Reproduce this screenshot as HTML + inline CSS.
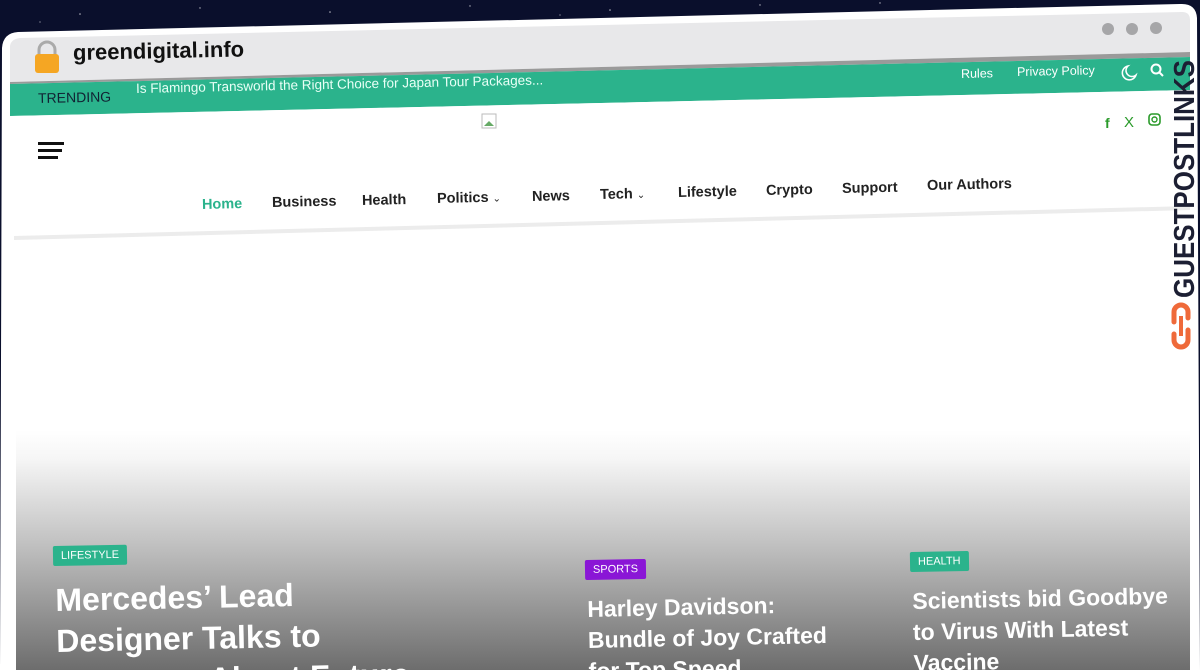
<!DOCTYPE html>
<html><head><meta charset="utf-8"><style>
html,body{margin:0;padding:0;width:1200px;height:670px;overflow:hidden;background:#0a0f2c;font-family:"Liberation Sans",sans-serif}
#w{position:relative;width:1200px;height:670px;overflow:hidden}
.a{position:absolute;white-space:nowrap;transform-origin:0 50%}
.nav{font-size:14.5px;font-weight:bold;color:#222}
.tag{position:absolute;color:#fff;font-size:11px;padding:4px 8px;border-radius:2px;transform-origin:0 50%}
.h{position:absolute;color:#fff;font-weight:bold;transform-origin:0 0;white-space:nowrap}
</style></head><body><div id="w">
<svg width="1200" height="670" style="position:absolute;left:0;top:0">
<defs>
<linearGradient id="g" x1="0" y1="0" x2="0" y2="1">
<stop offset="0" stop-color="#fff"/><stop offset="0.12" stop-color="#f6f6f6"/><stop offset="0.5" stop-color="#bdbdbd"/><stop offset="1" stop-color="#6d6d6d"/></linearGradient>
</defs>
<g fill="#fff" opacity="0.7"><circle cx="80" cy="14" r="0.8"/><circle cx="200" cy="8" r="0.7"/><circle cx="330" cy="12" r="0.8"/><circle cx="470" cy="6" r="0.7"/><circle cx="610" cy="10" r="0.8"/><circle cx="760" cy="5" r="0.7"/><circle cx="880" cy="3" r="0.7"/><circle cx="40" cy="22" r="0.6"/><circle cx="560" cy="15" r="0.6"/><circle cx="10" cy="300" r="0.6"/><circle cx="5" cy="480" r="0.6"/></g>
<path d="M18 32 L1180 4 Q1196 3 1197 18 L1200 670 L0 670 L2 48 Q3 33 18 32Z" fill="#fff"/>
<path d="M10 46 Q11 39 20 38 L1182 12 Q1190 12 1190 20 L1190 52 L10 82Z" fill="#e8e8ea"/>
<path d="M10 82 L1190 52 L1190 57 L10 84Z" fill="#9a9a9a"/>
<path d="M10 84 L1190 57 L1190 90 L10 116Z" fill="#2bb38c"/>
<path d="M12 116 L1190 90 L1190 670 L14 670Z" fill="#fff"/>
<path d="M14 236 L1190 206 L1190 210 L14 240Z" fill="#ececec"/>
<rect x="16" y="430" width="1174" height="240" fill="url(#g)"/>
<circle cx="1108" cy="29" r="6" fill="#a6a6a8"/><circle cx="1132" cy="29" r="6" fill="#a6a6a8"/><circle cx="1156" cy="28" r="6" fill="#a6a6a8"/>
<path d="M39 55 V50 a8 8 0 0 1 16 0 V55" fill="none" stroke="#aaa" stroke-width="3"/>
<rect x="35" y="54" width="24" height="19" rx="3" fill="#f5a623"/>
<path d="M1128 66 a7 7 0 1 0 8 9 a5.5 5.5 0 0 1 -8 -9z" fill="none" stroke="#fff" stroke-width="1.5"/>
<circle cx="1156" cy="69" r="4.5" fill="none" stroke="#fff" stroke-width="2"/><path d="M1159 72 L1163 76" stroke="#fff" stroke-width="2"/>
<rect x="38" y="142" width="26" height="3" fill="#111"/><rect x="38" y="149" width="24" height="3" fill="#111"/><rect x="38" y="156" width="20" height="3" fill="#111"/>
<rect x="482" y="114" width="14" height="14" fill="none" stroke="#bbb" stroke-width="1"/><path d="M484 126 L489 121 L494 126Z" fill="#6a6"/>
<text x="1105" y="128" font-family="Liberation Sans" font-weight="bold" font-size="14" fill="#2a9a2a">f</text>
<text x="1124" y="127" font-family="Liberation Sans" font-size="15" fill="#2a9a2a">X</text>
<rect x="1149" y="114" width="11" height="11" rx="3" fill="none" stroke="#2a9a2a" stroke-width="1.6"/><circle cx="1154.5" cy="119.5" r="2.5" fill="none" stroke="#2a9a2a" stroke-width="1.4"/>
<text transform="translate(1194,298) rotate(-90)" font-family="Liberation Sans" font-weight="bold" font-size="29" fill="#1c1f33" textLength="238" lengthAdjust="spacingAndGlyphs">GUESTPOSTLINKS</text>
<path d="M1188 318 v-6 a7 7 0 0 0 -14 0 v10 M1174 334 v6 a7 7 0 0 0 14 0 v-10" fill="none" stroke="#ef6a3a" stroke-width="5" stroke-linecap="round"/>
<path d="M1181 316 L1181 336" stroke="#ef6a3a" stroke-width="4"/>
</svg>
<div class="a" style="left:73px;top:40px;font-size:22px;font-weight:bold;color:#111;transform:rotate(-1.2deg)">greendigital.info</div>
<div class="a" style="left:38px;top:90px;font-size:14px;color:#123;transform:rotate(-1.2deg)">TRENDING</div>
<div class="a" style="left:136px;top:81px;font-size:13.5px;color:#e8fff6;transform:rotate(-1.2deg)">Is Flamingo Transworld the Right Choice for Japan Tour Packages...</div>
<div class="a" style="left:961px;top:67px;font-size:12.5px;color:#fff;transform:rotate(-1.2deg)">Rules</div>
<div class="a" style="left:1017px;top:65px;font-size:12.5px;color:#fff;transform:rotate(-1.2deg)">Privacy Policy</div>
<div class="a nav" style="left:202px;top:197px;color:#2bb38c;transform:rotate(-1.3deg)">Home</div>
<div class="a nav" style="left:272px;top:195px;transform:rotate(-1.3deg)">Business</div>
<div class="a nav" style="left:362px;top:193px;transform:rotate(-1.3deg)">Health</div>
<div class="a nav" style="left:437px;top:191px;transform:rotate(-1.3deg)">Politics <span style="font-weight:normal;font-size:10px">&#8964;</span></div>
<div class="a nav" style="left:532px;top:189px;transform:rotate(-1.3deg)">News</div>
<div class="a nav" style="left:600px;top:187px;transform:rotate(-1.3deg)">Tech <span style="font-weight:normal;font-size:10px">&#8964;</span></div>
<div class="a nav" style="left:678px;top:185px;transform:rotate(-1.3deg)">Lifestyle</div>
<div class="a nav" style="left:766px;top:183px;transform:rotate(-1.3deg)">Crypto</div>
<div class="a nav" style="left:842px;top:181px;transform:rotate(-1.3deg)">Support</div>
<div class="a nav" style="left:927px;top:178px;transform:rotate(-1.3deg)">Our Authors</div>
<div class="tag" style="left:53px;top:546px;background:#2bb38c;transform:rotate(-1deg)">LIFESTYLE</div>
<div class="tag" style="left:585px;top:560px;background:#8a16d6;transform:rotate(-1deg)">SPORTS</div>
<div class="tag" style="left:910px;top:552px;background:#2bb38c;transform:rotate(-1deg)">HEALTH</div>
<div class="h" style="left:55px;top:580px;font-size:32px;line-height:41px;transform:rotate(-1.2deg)">Mercedes’ Lead<br>Designer Talks to<br>Everyone About Future</div>
<div class="h" style="left:587px;top:594px;font-size:23px;line-height:31px;transform:rotate(-1.2deg)">Harley Davidson:<br>Bundle of Joy Crafted<br>for Top Speed</div>
<div class="h" style="left:912px;top:586px;font-size:23px;line-height:31px;transform:rotate(-1.2deg)">Scientists bid Goodbye<br>to Virus With Latest<br>Vaccine</div>
</div></body></html>
